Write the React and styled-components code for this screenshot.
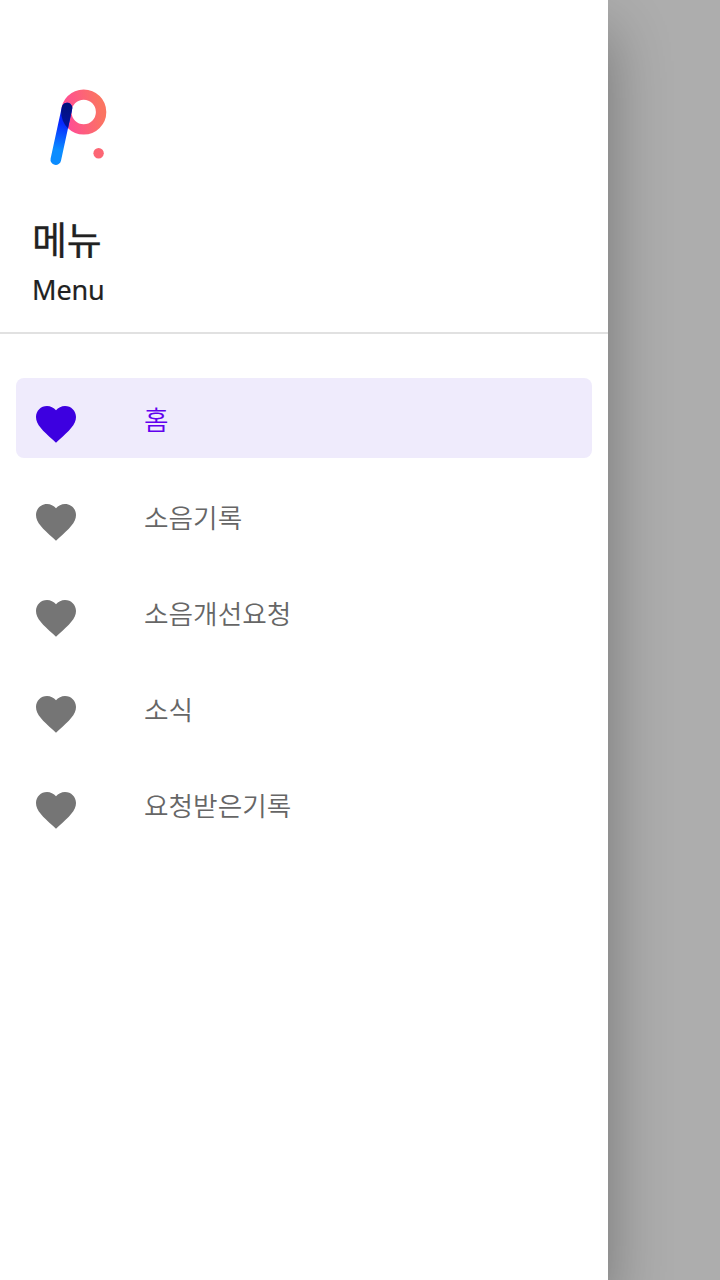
import React from "react";
import styled, { createGlobalStyle } from "styled-components";

const GlobalStyle = createGlobalStyle`
  * { box-sizing: border-box; }
  body { margin: 0; overflow: hidden; background: #adadad; }
`;

const Screen = styled.div`
  display: flex;
  width: 720px;
  height: 1280px;
  overflow: hidden;
  background: #adadad;
  font-family: "Noto Sans", "Noto Sans CJK KR", sans-serif;
`;

const Drawer = styled.aside`
  display: flex;
  flex-direction: column;
  width: 608px;
  height: 100%;
  background: #fff;
  box-shadow: 0 32px 58px rgba(0, 0, 0, 0.33);
`;

const Header = styled.header`
  display: flex;
  flex-direction: column;
  height: 334px;
  padding: 80px 32px 0;
  border-bottom: 2px solid #e1e1e1;
`;

const Logo = styled.svg`
  display: block;
  width: 96px;
  height: 96px;
`;

const Title = styled.h1`
  margin: 34px 0 0;
  height: 56px;
  font-family: "Noto Sans CJK KR", sans-serif;
  font-size: 38px;
  font-weight: 400;
  line-height: 56px;
  letter-spacing: -0.3px;
  color: #212121;
  -webkit-text-stroke: 0.3px #212121;
`;

const Subtitle = styled.p`
  margin: 5px 0 0;
  font-size: 27px;
  line-height: 38px;
  color: #212121;
  letter-spacing: -0.1px;
  -webkit-text-stroke: 0.2px #212121;
`;

const Menu = styled.nav`
  display: flex;
  flex-direction: column;
  gap: 16px;
  padding: 44px 16px 0;
`;

const MenuItem = styled.a`
  display: flex;
  align-items: center;
  height: 80px;
  margin-bottom: ${({ $active }) => ($active ? "2px" : "0")};
  padding-left: 16px;
  border-radius: 8px;
  background: ${({ $active }) => ($active ? "#efebfc" : "transparent")};
  color: ${({ $active }) => ($active ? "#6200ee" : "#666")};
`;

const HeartIcon = styled.svg`
  width: 48px;
  height: 48px;
  margin-top: 12px;
  fill: ${({ $active }) => ($active ? "#3d00e0" : "#757575")};
`;

const Label = styled.span`
  margin-left: 64px;
  padding-top: 2px;
  font-family: "Noto Sans CJK KR", sans-serif;
  font-size: 26.7px;
  font-weight: 350;
  line-height: 40px;
`;

const items = ["홈", "소음기록", "소음개선요청", "소식", "요청받은기록"];

export default function App() {
  return (
    <>
      <GlobalStyle />
      <Screen>
        <Drawer>
          <Header>
            <Logo viewBox="32 80 96 96">
              <defs>
                <linearGradient id="ring" x1="0" y1="0.6" x2="1" y2="0.4">
                  <stop offset="0" stopColor="#ff4d94" />
                  <stop offset="1" stopColor="#fb7462" />
                </linearGradient>
                <linearGradient id="stem" gradientUnits="userSpaceOnUse" x1="67" y1="108" x2="56" y2="160">
                  <stop offset="0.3" stopColor="#0827ff" />
                  <stop offset="0.8" stopColor="#0b8cff" />
                </linearGradient>
                <linearGradient id="overlap" gradientUnits="userSpaceOnUse" x1="67" y1="104" x2="63" y2="128">
                  <stop offset="0" stopColor="#02107c" />
                  <stop offset="1" stopColor="#0414a0" />
                </linearGradient>
                <clipPath id="ringArea">
                  <circle cx="83.7" cy="112" r="22.6" />
                </clipPath>
              </defs>
              <circle cx="83.7" cy="112" r="17.4" fill="none" stroke="url(#ring)" strokeWidth="10.4" />
              <path d="M67 108L55.8 159.6" stroke="url(#stem)" strokeWidth="10.6" strokeLinecap="round" />
              <path d="M67 108L55.8 159.6" stroke="url(#overlap)" strokeWidth="10.6" strokeLinecap="round" clipPath="url(#ringArea)" />
              <circle cx="98.6" cy="153.3" r="5.2" fill="#fc6674" />
            </Logo>
            <Title>메뉴</Title>
            <Subtitle>Menu</Subtitle>
          </Header>
          <Menu>
            {items.map((label, index) => (
              <MenuItem key={label} $active={index === 0}>
                <HeartIcon viewBox="0 0 24 24" $active={index === 0}>
                  <path d="M12 21.35l-1.45-1.32C5.4 15.36 2 12.28 2 8.5 2 5.42 4.42 3 7.5 3c1.74 0 3.41.81 4.5 2.09C13.09 3.81 14.76 3 16.5 3 19.58 3 22 5.42 22 8.5c0 3.78-3.4 6.86-8.55 11.54L12 21.35z" />
                </HeartIcon>
                <Label>{label}</Label>
              </MenuItem>
            ))}
          </Menu>
        </Drawer>
      </Screen>
    </>
  );
}
